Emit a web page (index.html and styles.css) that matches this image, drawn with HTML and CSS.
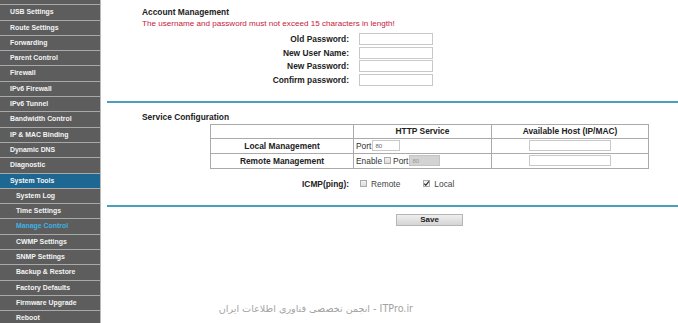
FILE: index.html
```html
<!DOCTYPE html>
<html lang="en">
<head>
    <meta charset="UTF-8">
    <title>Manage Control</title>
    <link rel="stylesheet" href="styles.css">
</head>
<body>
    <nav class="sidebar">
        <div class="menu-top"></div>
        <ul class="menu">
            <li class="menu-item">USB Settings</li>
            <li class="menu-item">Route Settings</li>
            <li class="menu-item">Forwarding</li>
            <li class="menu-item">Parent Control</li>
            <li class="menu-item">Firewall</li>
            <li class="menu-item">IPv6 Firewall</li>
            <li class="menu-item">IPv6 Tunnel</li>
            <li class="menu-item">Bandwidth Control</li>
            <li class="menu-item">IP &amp; MAC Binding</li>
            <li class="menu-item">Dynamic DNS</li>
            <li class="menu-item">Diagnostic</li>
            <li class="menu-item selected">System Tools</li>
            <li class="menu-item sub">System Log</li>
            <li class="menu-item sub">Time Settings</li>
            <li class="menu-item sub active">Manage Control</li>
            <li class="menu-item sub">CWMP Settings</li>
            <li class="menu-item sub">SNMP Settings</li>
            <li class="menu-item sub">Backup &amp; Restore</li>
            <li class="menu-item sub">Factory Defaults</li>
            <li class="menu-item sub">Firmware Upgrade</li>
            <li class="menu-item sub">Reboot</li>
        </ul>
    </nav>

    <main class="content">
        <section class="block">
            <div class="block-title">Account Management</div>
            <div class="warning">The username and password must not exceed 15 characters in length!</div>
            <div class="account-form">
                <label class="field-label">Old Password:</label>
                <input class="text-input" type="password">
                <label class="field-label">New User Name:</label>
                <input class="text-input" type="text">
                <label class="field-label">New Password:</label>
                <input class="text-input" type="password">
                <label class="field-label">Confirm password:</label>
                <input class="text-input" type="password">
            </div>
        </section>

        <hr class="divider divider-first">

        <section class="block">
            <div class="block-title title-service">Service Configuration</div>
            <table class="service-table">
                <tr class="row-head">
                    <th class="col-name"></th>
                    <th class="col-http">HTTP Service</th>
                    <th class="col-host">Available Host (IP/MAC)</th>
                </tr>
                <tr>
                    <td class="row-label">Local Management</td>
                    <td class="cell-left">
                        <span class="cell-text">Port</span><input class="port-input" type="text" value="80">
                    </td>
                    <td><input class="host-input" type="text"></td>
                </tr>
                <tr>
                    <td class="row-label">Remote Management</td>
                    <td class="cell-left">
                        <span class="cell-text">Enable</span><span class="check"></span><span class="cell-text">Port</span><input class="port-input disabled" type="text" value="80" disabled>
                    </td>
                    <td><input class="host-input" type="text"></td>
                </tr>
            </table>

            <div class="icmp-row">
                <span class="field-label">ICMP(ping):</span>
                <div class="icmp-options">
                    <span class="check"></span><span class="option-text">Remote</span>
                    <span class="check checked">
                        <svg width="7" height="7" viewBox="0 0 7 7"><path d="M1.2 3.6 L2.8 5.3 L5.9 1.4" fill="none" stroke="#333" stroke-width="1.3"/></svg>
                    </span><span class="option-text">Local</span>
                </div>
            </div>
        </section>

        <hr class="divider divider-second">

        <div class="actions">
            <button class="save-button">Save</button>
        </div>

        <div class="watermark" dir="rtl">ITPro.ir - انجمن تخصصی فناوری اطلاعات ایران</div>
    </main>
</body>
</html>
```

FILE: styles.css
```css
/* Router admin page - Manage Control */
* {
    margin: 0;
    padding: 0;
    box-sizing: border-box;
}

body {
    display: flex;
    height: 323px;
    overflow: hidden;
    background: #fff;
    font-family: 'Liberation Sans', Arial, sans-serif;
    color: #222;
}

/* Left menu */
.sidebar {
    width: 101px;
    flex-shrink: 0;
    background: #5d5d5d;
    border-right: 1px solid #b9b9b9;
    overflow: hidden;
}

.menu-top {
    height: 4.3px;
}

.menu {
    list-style: none;
}

.menu-item {
    height: 15.3px;
    line-height: 14.3px;
    border-top: 1px solid #a9a9a9;
    padding-left: 10px;
    font-size: 6.9px;
    font-weight: bold;
    color: #f4f4f4;
    white-space: nowrap;
}

.menu-item.sub {
    padding-left: 16px;
}

.menu-item.selected {
    background: #1d6892;
}

.menu-item.active {
    color: #3cb3e4;
}

/* Main area */
.content {
    flex: 1;
    font-size: 8.4px;
}

.block {
    padding-left: 41px;
}

.block-title {
    margin-top: 6px;
    line-height: 12px;
    font-weight: bold;
}

.title-service {
    margin-top: 8px;
}

.warning {
    line-height: 12px;
    font-size: 8.1px;
    color: #c8173c;
}

.account-form {
    display: grid;
    grid-template-columns: 207px 74px;
    grid-auto-rows: 13.7px;
    column-gap: 10px;
    align-items: center;
    margin-top: 2px;
}

.field-label {
    font-weight: bold;
    text-align: right;
}

.text-input {
    height: 12px;
    width: 74px;
    border: 1px solid #c9c9c9;
    background: #fff;
}

.divider {
    border: none;
    height: 2px;
    margin-left: 6px;
    background: #4a9fba;
}

.divider-first {
    margin-top: 14px;
}

.divider-second {
    margin-top: 15px;
}

/* Service table */
.service-table {
    margin-top: 1px;
    margin-left: 68px;
    width: 439px;
    border-collapse: collapse;
    font-size: 8.4px;
}

.service-table th,
.service-table td {
    border: 1px solid #aaa;
    text-align: center;
    padding: 0 2px;
    height: 15px;
}

.row-head th {
    height: 14px;
}

.col-name {
    width: 143px;
}

.col-http {
    width: 138px;
}

.row-label {
    font-weight: bold;
}

.service-table .cell-left {
    text-align: left;
    white-space: nowrap;
}

.cell-text {
    vertical-align: middle;
    color: #333;
}

.port-input {
    width: 28px;
    height: 11px;
    margin-left: 1px;
    border: 1px solid #c9c9c9;
    font-size: 6px;
    font-family: 'Liberation Sans', Arial, sans-serif;
    color: #666;
    padding-left: 2px;
    vertical-align: middle;
}

.port-input.disabled {
    width: 31px;
    background: #d3d3d3;
    color: #999;
    border-color: #c3c3c3;
}

.host-input {
    width: 82px;
    height: 11px;
    border: 1px solid #c9c9c9;
    vertical-align: middle;
}

.check {
    display: inline-block;
    width: 7px;
    height: 7px;
    margin: 0 2px;
    border: 1px solid #aaa;
    background: linear-gradient(#f2f2f2, #dcdcdc);
    vertical-align: middle;
    position: relative;
}

.check svg {
    position: absolute;
    left: -1px;
    top: -1px;
}

.check.checked {
    background: #f4f4f4;
}

/* ICMP row */
.icmp-row {
    display: flex;
    align-items: center;
    margin-top: 9px;
    line-height: 12px;
}

.icmp-row .field-label {
    width: 207px;
}

.icmp-options {
    display: flex;
    align-items: center;
    margin-left: 9px;
    color: #444;
}

.icmp-options .check {
    margin: 0 4px 0 2px;
}

.option-text {
    margin-right: 21px;
}

/* Save */
.actions {
    padding-left: 295px;
    margin-top: 7px;
}

.save-button {
    width: 67px;
    height: 12px;
    border: 1px solid #b5b5b5;
    background: linear-gradient(#efefef, #d4d4d4);
    font-family: 'Liberation Sans', Arial, sans-serif;
    font-size: 8px;
    font-weight: bold;
    color: #222;
}

.watermark {
    margin-top: 77px;
    width: 312px;
    font-family: 'DejaVu Sans', sans-serif;
    font-size: 9.6px;
    color: #a3a3a3;
}
```
